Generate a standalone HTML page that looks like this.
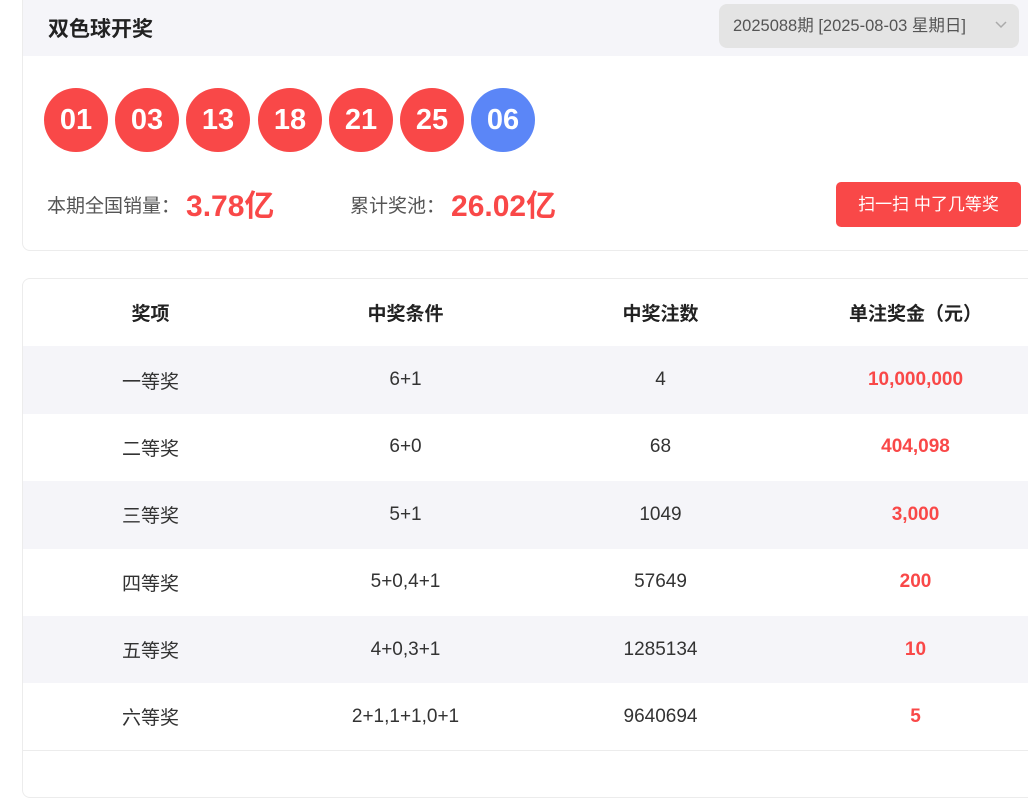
<!DOCTYPE html>
<html><head><meta charset="utf-8"><style>
*{margin:0;padding:0;box-sizing:border-box}
body{width:1028px;height:776px;overflow:hidden;background:#fff;font-family:"Liberation Sans","Noto Sans CJK SC",sans-serif;position:relative}
.card1{position:absolute;left:22px;top:-10px;width:1020px;height:261px;border:1px solid #ececec;border-radius:8px;background:#fff;overflow:hidden}
.hdr{position:absolute;left:0;top:0;width:100%;height:65px;background:#f5f5f9}
.title{position:absolute;left:25px;top:22px;font-size:21px;font-weight:bold;color:#222}
.sel{position:absolute;left:696px;top:13px;width:300px;height:44px;background:#e4e4e4;border-radius:8px;font-size:16.5px;color:#555;line-height:44px;padding-left:14px}
.sel svg{position:absolute;right:12px;top:17px}
.ball{position:absolute;top:97px;width:64px;height:64px;border-radius:50%;background:#f94848;color:#fff;font-size:29px;font-weight:bold;text-align:center;line-height:64px}
.lbl{position:absolute;top:201px;font-size:19px;color:#555;line-height:30px}
.num{font-size:30px;font-weight:bold;color:#f94848;vertical-align:top;margin-left:6px}
.btn{position:absolute;left:813px;top:191px;width:185px;height:45px;background:#f94848;border-radius:5px;color:#fff;font-size:17px;text-align:center;line-height:45px}
.card2{position:absolute;left:22px;top:278px;width:1020px;height:520px;border:1px solid #ececec;border-radius:8px;overflow:hidden;background:#fff}
table{border-collapse:collapse;width:1020px;table-layout:fixed}
td,th{height:67.4px;text-align:center;font-size:19px;color:#333;font-weight:normal}
th{font-weight:bold;color:#222}
tr.g td{background:#f5f5f9}
td.r{color:#f94848;font-weight:bold}
</style></head><body>
<div class="card1">
<div class="hdr"></div>
<div class="title">双色球开奖</div>
<div class="sel">2025088期 [2025-08-03 星期日]<svg width="12" height="8" viewBox="0 0 12 8"><path d="M1 1l5 5 5-5" stroke="#aaa" stroke-width="1.5" fill="none"/></svg></div>
<div class="ball" style="left:21px">01</div>
<div class="ball" style="left:92px">03</div>
<div class="ball" style="left:163px">13</div>
<div class="ball" style="left:235px">18</div>
<div class="ball" style="left:306px">21</div>
<div class="ball" style="left:377px">25</div>
<div class="ball" style="left:448px;background:#5b86f7">06</div>
<div class="lbl" style="left:24px">本期全国销量：<span class="num">3.78亿</span></div>
<div class="lbl" style="left:327px">累计奖池：<span class="num">26.02亿</span></div>
<div class="btn">扫一扫 中了几等奖</div>
</div>
<div class="card2"><table>
<tr><th>奖项</th><th>中奖条件</th><th>中奖注数</th><th>单注奖金（元）</th></tr>
<tr class="g"><td>一等奖</td><td>6+1</td><td>4</td><td class="r">10,000,000</td></tr>
<tr><td>二等奖</td><td>6+0</td><td>68</td><td class="r">404,098</td></tr>
<tr class="g"><td>三等奖</td><td>5+1</td><td>1049</td><td class="r">3,000</td></tr>
<tr><td>四等奖</td><td>5+0,4+1</td><td>57649</td><td class="r">200</td></tr>
<tr class="g"><td>五等奖</td><td>4+0,3+1</td><td>1285134</td><td class="r">10</td></tr>
<tr><td>六等奖</td><td>2+1,1+1,0+1</td><td>9640694</td><td class="r">5</td></tr>
<tr><td style="border-top:1px solid #ececec"></td><td style="border-top:1px solid #ececec"></td><td style="border-top:1px solid #ececec"></td><td style="border-top:1px solid #ececec"></td></tr>
</table></div>
</body></html>
